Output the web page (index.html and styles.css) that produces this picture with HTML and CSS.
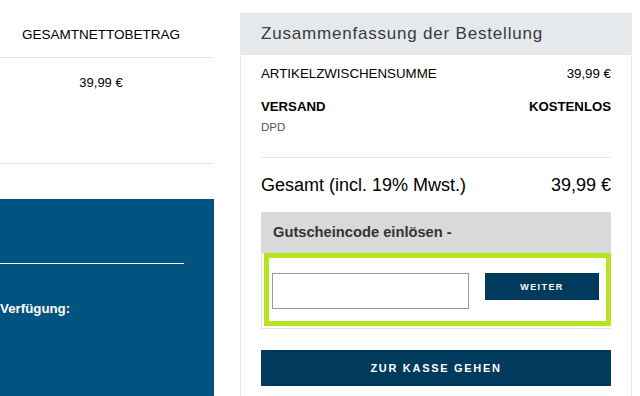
FILE: index.html
```html
<!DOCTYPE html>
<html lang="de">
<head>
    <meta charset="UTF-8">
    <title>Warenkorb</title>
    <link rel="stylesheet" href="styles.css">
</head>
<body>
    <div class="seite">
        <div class="links">
            <div class="tabelle-kopf">GESAMTNETTOBETRAG</div>
            <div class="tabelle-zeile">39,99 €</div>
            <div class="info-box">
                <div class="info-linie"></div>
                <div class="info-text">Verfügung:</div>
            </div>
        </div>
        <div class="zusammenfassung">
            <div class="zus-kopf">Zusammenfassung der Bestellung</div>
            <div class="zus-inhalt">
                <div class="zeile">
                    <span>ARTIKELZWISCHENSUMME</span>
                    <span>39,99 €</span>
                </div>
                <div class="zeile versand">
                    <span>VERSAND</span>
                    <span>KOSTENLOS</span>
                </div>
                <div class="dienst">DPD</div>
                <div class="zeile gesamt">
                    <span>Gesamt (incl. 19% Mwst.)</span>
                    <span>39,99 €</span>
                </div>
                <div class="gutschein-kopf">Gutscheincode einlösen -</div>
                <div class="gutschein-rahmen">
                    <div class="gutschein-form">
                        <input type="text" class="gutschein-feld">
                        <button class="btn-weiter">WEITER</button>
                    </div>
                </div>
                <button class="btn-kasse">ZUR KASSE GEHEN</button>
            </div>
        </div>
    </div>
</body>
</html>
```

FILE: styles.css
```css
body {
    margin: 0;
    font-family: "Liberation Sans", Arial, sans-serif;
    color: #000000;
    background-color: #ffffff;
    overflow: hidden;
}
.seite {
    display: flex;
    gap: 26px;
    height: 396px;
}
.links {
    width: 214px;
    display: flex;
    flex-direction: column;
}
.tabelle-kopf {
    height: 57px;
    line-height: 70px;
    font-size: 13.5px;
    text-align: center;
    padding-right: 12px;
    border-bottom: 1px solid #e6e6e6;
}
.tabelle-zeile {
    height: 105px;
    line-height: 50px;
    font-size: 13px;
    text-align: center;
    padding-right: 12px;
    border-bottom: 1px solid #e6e6e6;
}
.info-box {
    margin-top: 35px;
    flex: 1;
    background-color: #00547f;
    padding-top: 64px;
}
.info-linie {
    width: 184px;
    border-top: 1px solid #ffffff;
}
.info-text {
    margin-top: 37px;
    color: #ffffff;
    font-size: 13.3px;
    font-weight: bold;
}
.zusammenfassung {
    width: 390px;
    border-left: 1px solid #e8e8e8;
    border-right: 1px solid #e8e8e8;
    margin-top: 13px;
}
.zus-kopf {
    height: 42px;
    line-height: 42px;
    background-color: #e6e9ec;
    padding: 0 20px;
    font-size: 17px;
    letter-spacing: 0.8px;
    color: #3a3a3a;
}
.zus-inhalt {
    padding: 0 20px;
}
.zeile {
    display: flex;
    justify-content: space-between;
    font-size: 13.3px;
    line-height: 18px;
    margin-top: 10px;
}
.versand {
    margin-top: 15px;
    font-weight: bold;
    font-size: 13.2px;
}
.dienst {
    font-size: 11.5px;
    line-height: 16px;
    color: #555555;
    margin-top: 3px;
    padding-bottom: 22px;
    border-bottom: 1px solid #e6e6e6;
}
.gesamt {
    font-size: 18px;
    line-height: 22px;
    margin-top: 16px;
}
.gutschein-kopf {
    margin-top: 16px;
    height: 41px;
    line-height: 41px;
    background-color: #d9d9d9;
    padding-left: 12px;
    font-size: 14.7px;
    font-weight: bold;
    color: #333333;
}
.gutschein-rahmen {
    border: 1px solid #e3e3e3;
    border-top: none;
    border-right: none;
    padding: 0 0 2px 2px;
}
.gutschein-form {
    display: flex;
    align-items: flex-start;
    justify-content: space-between;
    border: 5px solid #b6e41f;
    padding: 15px 7px 12px 3px;
}
.gutschein-feld {
    width: 195px;
    height: 34px;
    margin: 0;
    padding: 0;
    border: 1px solid #999999;
}
.btn-weiter {
    width: 114px;
    height: 27px;
    border: none;
    background-color: #003a5c;
    color: #ffffff;
    font-family: "Liberation Sans", Arial, sans-serif;
    font-size: 9px;
    font-weight: bold;
    letter-spacing: 1.4px;
}
.btn-kasse {
    display: block;
    width: 100%;
    height: 36px;
    margin-top: 21px;
    border: none;
    background-color: #003a5c;
    color: #ffffff;
    font-family: "Liberation Sans", Arial, sans-serif;
    font-size: 11px;
    font-weight: bold;
    letter-spacing: 1.7px;
}
```
